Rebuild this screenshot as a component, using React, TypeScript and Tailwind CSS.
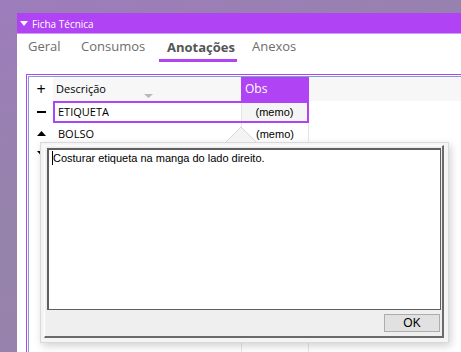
const purple = "bg-[#b043f3]";

const tabs = [
  { title: "Geral", w: "w-[53px]" },
  { title: "Consumos", w: "w-[86px]" },
  { title: "Anotações", w: "w-[78px]", active: true },
  { title: "Anexos", w: "w-[80px] ml-[7px]" },
];

const TriUp = () => (
  <svg width="9" height="5" viewBox="0 0 9 5" className="mb-[2px]">
    <path d="M4.5 0 L9 5 L0 5 Z" fill="#000" />
  </svg>
);

const TriDown = () => (
  <svg width="9" height="5" viewBox="0 0 9 5" className="mb-[6px]">
    <path d="M0 0 L9 0 L4.5 5 Z" fill="#000" />
  </svg>
);

const MemoPopup = () => (
  <div className="absolute left-[40px] top-[142px] w-[409px] h-[201px]">
    {/* callout pointing at the (memo) cell */}
    <svg width="32" height="17" viewBox="0 0 32 17" className="absolute left-[186px] top-[-16px]">
      <path d="M0 16 L15 1 L30 16" fill="#f4f4f4" stroke="#d6d6d6" strokeWidth="1" />
    </svg>
    <div className="w-full h-full bg-[#f4f4f4] border border-[#d9d9d9] shadow-[2px_3px_8px_rgba(0,0,0,0.18)] pl-[3px] pt-[2px]">
      <div className="w-[400px] h-[193px] bg-[#efefef] border-l border-t border-l-white border-t-white border-r-2 border-b-2 border-r-[#6a6a6a] border-b-[#6a6a6a] flex flex-col pl-[2px] pt-[2px]">
        <div className="w-[394px] h-[162px] bg-white border border-[#5f5f5f] border-t-2 border-l-2 relative">
          <div className="absolute left-[3px] top-[1px] w-[1px] h-[14px] bg-black" />
          <p className="pl-[4px] pt-[1px] text-[11px] leading-[15px] text-black [font-family:'Liberation_Sans',Arial,sans-serif]">
            Costurar etiqueta na manga do lado direito.
          </p>
        </div>
        <div className="flex flex-1 items-center justify-end pr-[2px]">
          <button className="w-[56px] h-[18px] bg-[#e1e1e1] border border-[#adadad] text-[12px] leading-[16px] text-black [font-family:'Liberation_Sans',Arial,sans-serif]">
            OK
          </button>
        </div>
      </div>
    </div>
  </div>
);

const App = () => {
  return (
    <div className="relative w-[461px] h-[352px] overflow-hidden bg-[linear-gradient(160deg,#9d7cbb_0%,#9583aa_45%,#9a80b0_100%)] pl-[17px] pt-[13px] flex [font-family:'Open_Sans',sans-serif]">
      <div className="flex flex-col flex-1 bg-white">
        <div className={`${purple} h-[21px] border-b border-[#d49af8] flex items-center pl-[3px] gap-[4px]`}>
          <svg width="8" height="5" viewBox="0 0 8 5">
            <path d="M0 0 L8 0 L4 5 Z" fill="#fff" />
          </svg>
          <span className="text-white text-[10px] leading-[12px] pt-[1px]">Ficha Técnica</span>
        </div>

        <div className="flex h-[28px] pl-[3px]">
          {tabs.map((t, i) => (
            <div
              key={i}
              className={`${t.w} h-full pl-[8px] flex items-center text-[13px] ${
                t.active
                  ? "font-bold text-[#555] border-b-[3px] border-[#b043f3]"
                  : "text-[#6d6d6d] pb-[3px]"
              }`}
            >
              <span className={t.active ? "pt-[3px]" : ""}>{t.title}</span>
            </div>
          ))}
        </div>

        {/* grid */}
        <div className="flex-1 ml-[9px] mt-[12px] border-l border-t border-[#b043f3] pl-[1px] pt-[1px] flex">
          <div className="flex-1 border-l border-t border-[#7f9fca] flex flex-col text-[11px] text-black">
            <div className="flex h-[24px]">
              <div className="w-[24px] flex items-center justify-center text-[16px] leading-none">+</div>
              <div className="w-[188px] bg-[#f7f7f7] relative pl-[3px] flex items-center">
                <span>Descrição</span>
                <svg width="9" height="4" viewBox="0 0 9 4" className="absolute left-[91px] top-[17px]">
                  <path d="M0 0 L9 0 L4.5 4 Z" fill="#b8b8b8" />
                </svg>
              </div>
              <div className={`w-[68px] ${purple} text-white text-[12px] pl-[4px] flex items-center`}>Obs</div>
              <div className="flex-1 bg-[#f7f7f7]" />
            </div>

            <div className="flex h-[22px]">
              <div className="w-[24px] flex items-center justify-center">
                <div className="w-[9px] h-[1.5px] bg-black" />
              </div>
              <div className="w-[256px] border-2 border-[#b043f3] flex">
                <div className="w-[186px] pl-[3px] flex items-center">ETIQUETA</div>
                <div className="flex-1 bg-[#f5f5f5] border-l border-[#e6e6e6] flex items-center justify-center text-[11px] [font-family:'Liberation_Sans',Arial,sans-serif]">
                  (memo)
                </div>
              </div>
            </div>

            <div className="flex h-[22px]">
              <div className="w-[24px] flex items-center justify-center">
                <TriUp />
              </div>
              <div className="w-[188px] pl-[5px] flex items-center">BOLSO</div>
              <div className="w-[68px] border-l border-r border-[#e6e6e6] flex items-center justify-center text-[11px] [font-family:'Liberation_Sans',Arial,sans-serif]">
                (memo)
              </div>
            </div>

            <div className="flex h-[22px]">
              <div className="w-[24px] flex items-center justify-center">
                <TriDown />
              </div>
              <div className="w-[188px]" />
              <div className="w-[68px] border-l border-r border-[#e6e6e6]" />
            </div>

            <div className="flex flex-1">
              <div className="w-[212px]" />
              <div className="w-[68px] border-l border-r border-[#e6e6e6]" />
            </div>
          </div>
        </div>
      </div>

      <MemoPopup />
    </div>
  );
};

export default App;
